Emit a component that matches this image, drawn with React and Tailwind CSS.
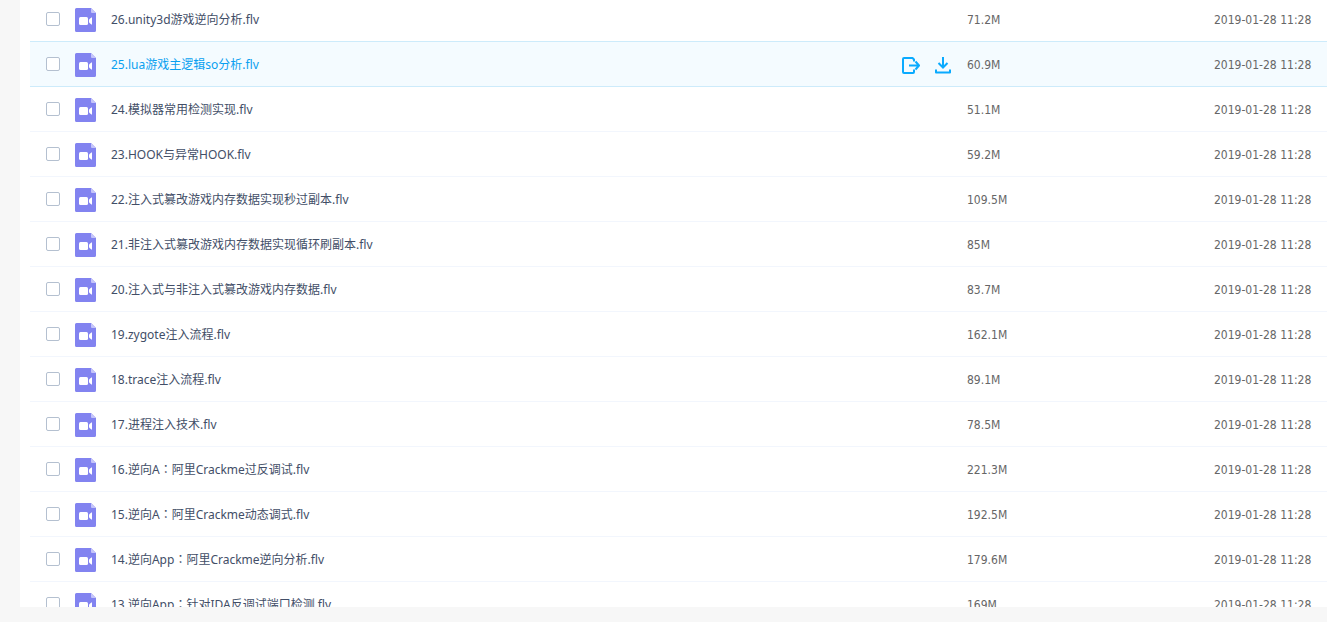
import React, { useState } from 'react';
import clsx from 'clsx';

const DATE = '2019-01-28 11:28';

const FILES = [
  { name: '26.unity3d游戏逆向分析.flv', size: '71.2M' },
  { name: '25.lua游戏主逻辑so分析.flv', size: '60.9M', active: true },
  { name: '24.模拟器常用检测实现.flv', size: '51.1M' },
  { name: '23.HOOK与异常HOOK.flv', size: '59.2M' },
  { name: '22.注入式篡改游戏内存数据实现秒过副本.flv', size: '109.5M' },
  { name: '21.非注入式篡改游戏内存数据实现循环刷副本.flv', size: '85M' },
  { name: '20.注入式与非注入式篡改游戏内存数据.flv', size: '83.7M' },
  { name: '19.zygote注入流程.flv', size: '162.1M' },
  { name: '18.trace注入流程.flv', size: '89.1M' },
  { name: '17.进程注入技术.flv', size: '78.5M' },
  { name: '16.逆向A：阿里Crackme过反调试.flv', size: '221.3M' },
  { name: '15.逆向A：阿里Crackme动态调式.flv', size: '192.5M' },
  { name: '14.逆向App：阿里Crackme逆向分析.flv', size: '179.6M' },
  { name: '13.逆向App：针对IDA反调试端口检测.flv', size: '169M' },
];

function VideoIcon() {
  return (
    <svg width="21" height="24" viewBox="0 0 21 24" className="shrink-0" aria-hidden="true">
      <path d="M1.5 0H16l5 5v17.5a1.5 1.5 0 0 1-1.5 1.5h-18A1.5 1.5 0 0 1 0 22.5v-21A1.5 1.5 0 0 1 1.5 0Z" fill="#8283f0" />
      <path d="M16 0l5 5h-4a1 1 0 0 1-1-1Z" fill="#c5c5fa" />
      <rect x="4" y="9" width="9" height="8" rx="1.5" fill="#fff" />
      <path d="M17 9.300v7.400c-1-.300-3-2-3-2.700v-2c0-.700 2-2.400 3-2.700Z" fill="#fff" />
    </svg>
  );
}

function ShareIcon() {
  return (
    <svg width="18" height="17" viewBox="0 0 18 17" fill="none" stroke="#09aaff" strokeWidth="2" strokeLinejoin="round" aria-hidden="true">
      <path d="M12 4.500V2.500L10.500 1H2a1 1 0 0 0-1 1v13a1 1 0 0 0 1 1h9a1 1 0 0 0 1-1v-2.500" />
      <path d="M7 8.500h10M13.500 4.500l3.500 4-3.500 4" />
    </svg>
  );
}

function DownloadIcon() {
  return (
    <svg width="16" height="17" viewBox="0 0 16 17" fill="none" stroke="#09aaff" strokeWidth="2" aria-hidden="true">
      <path d="M8 0v10.500M3.500 6L8 10.500 12.500 6" />
      <path d="M1 12.500V15.500h14v-3" strokeLinejoin="round" />
    </svg>
  );
}

// full-width colons are set from the TC face, where they sit centred
function FileName({ name }) {
  const [head, tail] = name.split('：');
  if (tail === undefined) return name;
  return (
    <>
      {head}
      <span className="font-['Noto_Sans_CJK_TC',sans-serif] leading-none">：</span>
      {tail}
    </>
  );
}

function FileRow({ file, beforeActive }) {
  const [checked, setChecked] = useState(false);

  const cell = clsx(
    'border-b',
    file.active || beforeActive ? 'border-[#cdebfb]' : 'border-[#f2f6fd]'
  );
  const meta = "p-0 pt-0.5 font-['DejaVu_Sans_Condensed','DejaVu_Sans',sans-serif] whitespace-nowrap text-[#666]";

  return (
    <tr className={clsx('h-[45px]', file.active ? 'bg-[#f4fbff]' : 'bg-white')}>
      <td className={clsx(cell, 'p-0 pl-4')}>
        <div className="flex items-center">
          <input
            type="checkbox"
            aria-label={file.name}
            checked={checked}
            onChange={() => setChecked(!checked)}
            className="size-3.5 shrink-0 appearance-none rounded-xs border border-[#b4c0d0] bg-white checked:bg-[#09aaff]"
          />
          <div className="mt-0.5 ml-[15px] shrink-0">
            <VideoIcon />
          </div>
          <a
            href="#"
            className={clsx('mt-0.5 ml-[15px] h-4 flex-1 whitespace-nowrap', file.active ? 'text-[#09a0f0]' : 'text-[#424e67]')}
          >
            <FileName name={file.name} />
          </a>
          {file.active && (
            <div className="mt-0.5 mr-4 flex items-center gap-[15px]">
              <button type="button" aria-label="分享"><ShareIcon /></button>
              <button type="button" aria-label="下载"><DownloadIcon /></button>
            </div>
          )}
        </div>
      </td>
      <td className={clsx(cell, meta)}>{file.size}</td>
      <td className={clsx(cell, meta)}>{DATE}</td>
    </tr>
  );
}

export default function App() {
  return (
    <div className="flex h-screen flex-col bg-[#f7f7f7] pb-[15px] pl-5 font-['Noto_Sans','Noto_Sans_CJK_SC',sans-serif] text-xs">
      <main className="min-h-0 flex-1 overflow-hidden bg-white pl-2.5">
        {/* list is scrolled a little, so the first row is cut at the top */}
        <table className="-mt-[3px] w-full table-fixed border-separate border-spacing-0">
          <colgroup>
            <col />
            <col className="w-[247px]" />
            <col className="w-[113px]" />
          </colgroup>
          <tbody>
            {FILES.map((file, i) => (
              <FileRow key={file.name} file={file} beforeActive={FILES[i + 1]?.active} />
            ))}
          </tbody>
        </table>
      </main>
    </div>
  );
}
